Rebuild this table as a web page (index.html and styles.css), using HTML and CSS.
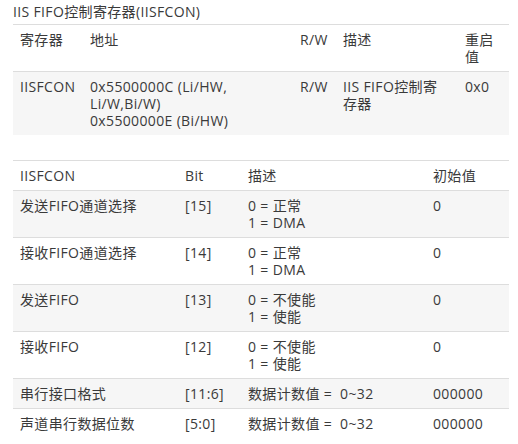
FILE: index.html
```html
<!DOCTYPE html>
<html lang="zh">
<head>
<meta charset="utf-8">
<link rel="stylesheet" href="styles.css">
</head>
<body>
<div class="page">
  <div class="title">IIS FIFO控制寄存器(IISFCON)</div>
  <table class="tbl reg">
    <colgroup>
      <col class="c1"><col class="c2"><col class="c3"><col class="c4"><col class="c5">
    </colgroup>
    <thead>
      <tr><th>寄存器</th><th>地址</th><th>R/W</th><th>描述</th><th>重启值</th></tr>
    </thead>
    <tbody>
      <tr class="shade">
        <td>IISFCON</td>
        <td>0x5500000C (Li/HW,<br>Li/W,Bi/W)<br>0x5500000E (Bi/HW)</td>
        <td>R/W</td>
        <td>IIS FIFO控制寄<br>存器</td>
        <td>0x0</td>
      </tr>
    </tbody>
  </table>

  <table class="tbl bits">
    <colgroup>
      <col class="d1"><col class="d2"><col class="d3"><col class="d4">
    </colgroup>
    <thead>
      <tr><th>IISFCON</th><th>Bit</th><th>描述</th><th>初始值</th></tr>
    </thead>
    <tbody>
      <tr class="shade"><td>发送FIFO通道选择</td><td>[15]</td><td>0 = 正常<br>1 = DMA</td><td>0</td></tr>
      <tr><td>接收FIFO通道选择</td><td>[14]</td><td>0 = 正常<br>1 = DMA</td><td>0</td></tr>
      <tr class="shade"><td>发送FIFO</td><td>[13]</td><td>0 = 不使能<br>1 = 使能</td><td>0</td></tr>
      <tr><td>接收FIFO</td><td>[12]</td><td>0 = 不使能<br>1 = 使能</td><td>0</td></tr>
      <tr class="shade"><td>串行接口格式</td><td>[11:6]</td><td>数据计数值 =&nbsp; 0~32</td><td>000000</td></tr>
      <tr><td>声道串行数据位数</td><td>[5:0]</td><td>数据计数值 =&nbsp; 0~32</td><td>000000</td></tr>
    </tbody>
  </table>
</div>
</body>
</html>
```

FILE: styles.css
```css
html, body {
  margin: 0;
  padding: 0;
  background: #ffffff;
}

body {
  font-family: "Open Sans", "Noto Sans", "Noto Sans CJK SC", sans-serif;
  font-size: 14px;
  letter-spacing: 0.35px;
  color: #3a3a3a;
}

.page {
  padding: 3px 9px 0 13px;
}

.title {
  line-height: 18px;
  margin-bottom: 3px;
}

.tbl {
  width: 496px;
  border-collapse: collapse;
  table-layout: fixed;
}

.tbl th,
.tbl td {
  text-align: left;
  font-weight: normal;
  vertical-align: top;
  line-height: 17px;
  padding: 6px 7px 6px 7px;
  border-top: 1px solid #dddddd;
}

.tbl thead th {
  border-top: 1px solid #dddddd;
  border-bottom: 1px solid #dddddd;
}

.shade td {
  background: #f6f6f6;
}

.reg .c1 { width: 70px; }
.reg .c2 { width: 210px; }
.reg .c3 { width: 43px; }
.reg .c4 { width: 122px; }
.reg .c5 { width: 51px; }

.bits {
  margin-top: 25px;
}

.bits .d1 { width: 165px; }
.bits .d2 { width: 63px; }
.bits .d3 { width: 185px; }
.bits .d4 { width: 83px; }
```
